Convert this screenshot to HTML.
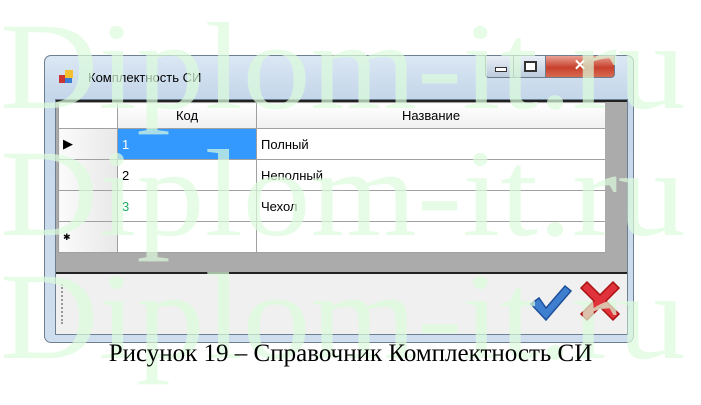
<!DOCTYPE html>
<html><head><meta charset="utf-8"><style>
body{margin:0;width:701px;height:405px;background:#fff;position:relative;overflow:hidden;font-family:"Liberation Sans",sans-serif}
.win{position:absolute;left:44px;top:55px;width:590px;height:288px;border:1px solid #6e7f91;border-radius:7px;background:linear-gradient(#dbe7f4,#c5d7ea 40px,#cfdeee);box-sizing:border-box}
.title{position:absolute;left:43px;top:14px;font-size:13px;color:#000}
.ico{position:absolute;left:13px;top:13px;width:16px;height:16px}
.btn{position:absolute;top:0;height:22px;border:1px solid #6d7d8e;border-top:none;box-sizing:border-box}
.client{position:absolute;left:10px;top:43px;width:571px;height:234px;background:#f0f0f0;border:1px solid #6e7f91}
.grid{position:absolute;left:0;top:0;width:571px;height:174px;background:#ababab;border-bottom:2px solid #222;border-top:2px solid #222;box-sizing:border-box}
table{position:absolute;left:2px;top:0;border-collapse:collapse;font-size:13px}
td{border:1px solid #a0a0a0;height:30px;padding:0 4px;background:#fff}
tr.h td{height:25px;text-align:center;background:linear-gradient(#fff,#f0f0f0)}
td.rh{width:50px;background:linear-gradient(90deg,#fbfbfb,#e8e8e8)}
.wm{position:absolute;left:0;font-family:"Liberation Serif",serif;font-size:124px;color:#dcfcdc;opacity:.7;white-space:nowrap;line-height:1;pointer-events:none;transform:scaleX(1.1);transform-origin:0 0}
.cap{position:absolute;top:340px;left:0;width:701px;text-align:center;font-family:"Liberation Serif",serif;font-size:25px}
</style></head><body>
<div class="win">
<svg class="ico" viewBox="0 0 16 16"><rect x="1" y="6" width="6" height="8" fill="#c33"/><rect x="7" y="1" width="8" height="8" fill="#f5c030"/><rect x="7" y="9" width="7" height="5" fill="#3a7bd5"/></svg>
<div class="title">Комплектность СИ</div>
<div class="btn" style="left:440px;width:29px;background:linear-gradient(#e9eff7,#bccbdc);border-radius:0 0 0 4px"><div style="position:absolute;left:9px;top:11px;width:10px;height:3px;border:1px solid #333;background:#fff"></div></div>
<div class="btn" style="left:468px;width:33px;background:linear-gradient(#e9eff7,#bccbdc)"><div style="position:absolute;left:10px;top:5px;width:9px;height:7px;border:2px solid #333;background:#fff"></div></div>
<div class="btn" style="left:500px;width:70px;background:linear-gradient(#e9a194,#c7402c 55%,#d86a52);border-radius:0 0 4px 0;color:#fff;font-weight:bold;text-align:center;font-size:15px;line-height:20px">✕</div>
<div class="client">
<div class="grid">
<table>
<tr class="h"><td class="rh" style="background:#fff"></td><td style="width:130px">Код</td><td style="width:340px">Название</td></tr>
<tr><td class="rh">▶</td><td style="background:#3399ff;color:#fff">1</td><td>Полный</td></tr>
<tr><td class="rh"></td><td>2</td><td>Неполный</td></tr>
<tr><td class="rh"></td><td style="color:#2a6">3</td><td>Чехол</td></tr>
<tr><td class="rh" style="font-size:9px">✱</td><td></td><td></td></tr>
</table>
<div style="position:absolute;right:0;top:0;width:22px;height:170px;background:#ababab"></div>
</div>
<div style="position:absolute;left:5px;top:184px;width:2px;height:40px;border-left:2px dotted #999"></div>
<svg style="position:absolute;left:473px;top:182px" width="44" height="42" viewBox="0 0 44 42"><path d="M2 22 L10 16 L17 26 L36 4 L42 9 L17 38 Z" fill="#3f7fcf" stroke="#1d4f9a" stroke-width="1.5"/></svg>
<svg style="position:absolute;left:521px;top:178px" width="46" height="46" viewBox="0 0 46 46"><path d="M4 10 L10 4 L23 17 L36 4 L42 10 L29 23 L42 36 L36 42 L23 29 L10 42 L4 36 L17 23 Z" fill="#e0323a" stroke="#a11" stroke-width="1.5"/></svg>
</div>
</div>
<div class="wm" style="top:5px">Diplom-it.ru</div>
<div class="wm" style="top:132px">Diplom-it.ru</div>
<div class="wm" style="top:255px">Diplom-it.ru</div>
<div class="cap">Рисунок 19 – Справочник Комплектность СИ</div>
</body></html>
